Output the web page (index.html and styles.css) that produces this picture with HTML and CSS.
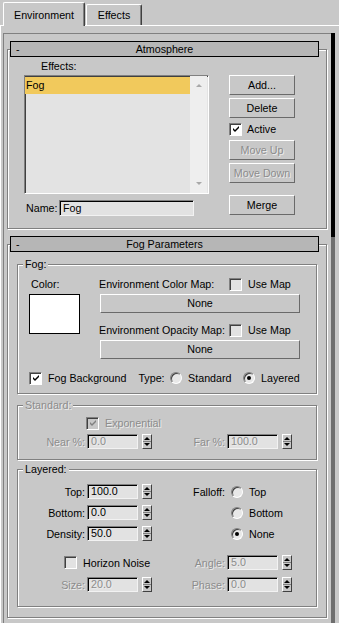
FILE: index.html
```html
<!DOCTYPE html>
<html lang="en">
<head>
    <meta charset="UTF-8">
    <meta name="viewport" content="width=device-width, initial-scale=1.0">
    <title>Environment and Effects</title>
    <link rel="stylesheet" href="styles.css">
</head>
<body>
    <div class="tabs">
        <div class="tab tab-env">Environment</div>
        <div class="tab tab-fx">Effects</div>
    </div>

    <div class="panel">
        <div class="scroller">
            <div class="rollout-list">

                <!-- Atmosphere -->
                <div class="rollout">
                    <div class="rollout-head"><span class="minus">-</span><span class="title">Atmosphere</span></div>
                    <div class="atmo-body">
                        <div class="atmo-left">
                            <div class="effects-label">Effects:</div>
                            <div class="list">
                                <div class="list-items">
                                    <div class="list-item selected">Fog</div>
                                </div>
                                <div class="list-scroll"><span class="arrow-up"></span><span class="arrow-down"></span></div>
                            </div>
                            <div class="name-row">
                                <span class="name-label">Name:</span>
                                <div class="field name-field">Fog</div>
                            </div>
                        </div>
                        <div class="atmo-right">
                            <div class="btn">Add...</div>
                            <div class="btn gap">Delete</div>
                            <div class="check-row gap">
                                <span class="check on"><svg width="9" height="9" viewBox="0 0 9 9"><polygon points="1,3 3,5 7,1 7,3 3,7 1,5"/></svg></span>
                                <span class="check-text active-text">Active</span>
                            </div>
                            <div class="btn gap dis">Move Up</div>
                            <div class="btn gap dis">Move Down</div>
                            <div class="btn merge">Merge</div>
                        </div>
                    </div>
                </div>

                <!-- Fog Parameters -->
                <div class="rollout">
                    <div class="rollout-head"><span class="minus">-</span><span class="title">Fog Parameters</span></div>
                    <div class="fog-body">

                        <div class="group">
                            <div class="group-title">Fog:</div>
                            <div class="fog-top">
                                <div class="color-col">
                                    <div class="color-label">Color:</div>
                                    <div class="swatch"></div>
                                </div>
                                <div class="maps-col">
                                    <div class="map-row">
                                        <span class="map-label">Environment Color Map:</span>
                                        <span class="check"></span>
                                        <span class="check-text">Use Map</span>
                                    </div>
                                    <div class="btn map-btn">None</div>
                                    <div class="map-row second">
                                        <span class="map-label">Environment Opacity Map:</span>
                                        <span class="check"></span>
                                        <span class="check-text">Use Map</span>
                                    </div>
                                    <div class="btn map-btn">None</div>
                                </div>
                            </div>
                            <div class="fog-opts">
                                <div class="fog-bg">
                                    <span class="check on"><svg width="9" height="9" viewBox="0 0 9 9"><polygon points="1,3 3,5 7,1 7,3 3,7 1,5"/></svg></span>
                                    <span class="check-text">Fog Background</span>
                                </div>
                                <span class="type-label">Type:</span>
                                <div class="opt">
                                    <span class="radio"></span>
                                    <span class="opt-text">Standard</span>
                                </div>
                                <div class="opt">
                                    <span class="radio on"></span>
                                    <span class="opt-text">Layered</span>
                                </div>
                            </div>
                        </div>

                        <div class="group group-std">
                            <div class="group-title dis">Standard:</div>
                            <div class="prow exp-row">
                                <span class="check dis exp-check"><svg width="9" height="9" viewBox="0 0 9 9"><polygon points="1,3 3,5 7,1 7,3 3,7 1,5"/></svg></span>
                                <span class="check-text dis">Exponential</span>
                            </div>
                            <div class="prow near-row">
                                <div class="half-l">
                                    <span class="plabel dis">Near %:</span>
                                    <div class="field num dis">0.0</div>
                                    <span class="spin"></span>
                                </div>
                                <div class="half-r">
                                    <span class="plabel-r dis">Far %:</span>
                                    <div class="field num dis">100.0</div>
                                    <span class="spin"></span>
                                </div>
                            </div>
                        </div>

                        <div class="group group-layered">
                            <div class="group-title">Layered:</div>
                            <div class="prow row-1">
                                <div class="half-l">
                                    <span class="plabel">Top:</span>
                                    <div class="field num">100.0</div>
                                    <span class="spin"></span>
                                </div>
                                <div class="half-r">
                                    <span class="plabel-r">Falloff:</span>
                                    <span class="radio"></span>
                                    <span class="opt-text">Top</span>
                                </div>
                            </div>
                            <div class="prow row-n">
                                <div class="half-l">
                                    <span class="plabel">Bottom:</span>
                                    <div class="field num">0.0</div>
                                    <span class="spin"></span>
                                </div>
                                <div class="half-r">
                                    <span class="plabel-r"></span>
                                    <span class="radio"></span>
                                    <span class="opt-text">Bottom</span>
                                </div>
                            </div>
                            <div class="prow row-n">
                                <div class="half-l">
                                    <span class="plabel">Density:</span>
                                    <div class="field num">50.0</div>
                                    <span class="spin"></span>
                                </div>
                                <div class="half-r">
                                    <span class="plabel-r"></span>
                                    <span class="radio on"></span>
                                    <span class="opt-text">None</span>
                                </div>
                            </div>
                            <div class="prow row-4">
                                <div class="half-l">
                                    <span class="check horizon-check"></span>
                                    <span class="check-text">Horizon Noise</span>
                                </div>
                                <div class="half-r">
                                    <span class="plabel-r dis">Angle:</span>
                                    <div class="field num dis">5.0</div>
                                    <span class="spin"></span>
                                </div>
                            </div>
                            <div class="prow row-5">
                                <div class="half-l">
                                    <span class="plabel dis">Size:</span>
                                    <div class="field num dis">20.0</div>
                                    <span class="spin"></span>
                                </div>
                                <div class="half-r">
                                    <span class="plabel-r dis">Phase:</span>
                                    <div class="field num dis">0.0</div>
                                    <span class="spin"></span>
                                </div>
                            </div>
                        </div>

                    </div>
                </div>

            </div>
            <div class="scrollbar"><div class="thumb"></div></div>
        </div>
    </div>
</body>
</html>
```

FILE: styles.css
```css
* {
    margin: 0;
    padding: 0;
    box-sizing: border-box;
}

body {
    width: 339px;
    height: 623px;
    overflow: hidden;
    background-color: #c8c8c8;
    font-family: "Liberation Sans", Arial, sans-serif;
    font-size: 10.7px;
    color: #000;
    white-space: nowrap;
}

.dis {
    color: #8c8c8c;
    text-shadow: 1px 1px 0 #ececec;
}

/* tabs */

.tabs {
    display: flex;
    align-items: flex-end;
    height: 25px;
    padding-left: 3px;
}

.tab {
    height: 21px;
    border: 1px solid #fff;
    border-right-color: #404040;
    border-bottom: none;
    border-radius: 2px 2px 0 0;
    box-shadow: inset -1px 0 0 #808080;
    text-align: center;
    line-height: 20px;
}

.tab-env {
    position: relative;
    z-index: 1;
    width: 82px;
    height: 24px;
    margin-bottom: -1px;
    background-color: #c8c8c8;
    line-height: 24px;
}

.tab-fx {
    width: 56px;
    margin-left: 1px;
}

.panel {
    height: 598px;
    border-top: 1px solid #fff;
    border-left: 1px solid #fff;
    padding: 7px 0 0 2px;
}

.scroller {
    display: flex;
    height: 100%;
}

.rollout-list {
    width: 328px;
    border-top: 1px solid #808080;
    border-left: 1px solid #808080;
}

.scrollbar {
    width: 4px;
    background-color: #6e6e6e;
}

.thumb {
    height: 204px;
    background-color: #000;
}

/* rollouts */

.rollout {
    width: 320px;
    margin: 15px 0 0 3px;
    border: 1px solid #808080;
    box-shadow: inset 1px 1px 0 #fff, 1px 1px 0 #fff;
}

.rollout-head {
    display: flex;
    align-items: center;
    width: 309px;
    height: 16px;
    margin: -9px 0 0 2px;
    padding: 0 13px 0 5px;
    border: 1px solid #000;
    background-color: #b6b6b6;
    line-height: 14px;
}

.minus {
    width: 8px;
}

.title {
    flex: 1;
    text-align: center;
}

/* buttons, fields, checks */

.btn {
    height: 20px;
    border: 1px solid;
    border-color: #fff #6a6a6a #6a6a6a #fff;
    text-align: center;
    line-height: 18px;
}

.field {
    height: 15px;
    border: 1px solid;
    border-color: #808080 #f2f2f2 #f2f2f2 #808080;
    box-shadow: inset 1px 1px 0 #000;
    background-color: #e2e2e2;
    padding-left: 3px;
    line-height: 13px;
}

.check {
    display: flex;
    align-items: center;
    justify-content: center;
    flex-shrink: 0;
    width: 13px;
    height: 13px;
    border: 1px solid;
    border-color: #808080 #fff #fff #808080;
    box-shadow: inset 1px 1px 0 #404040;
    background-color: #e2e2e2;
    padding: 1px 0 0 1px;
}

.check.on {
    background-color: #fff;
}

.check.dis {
    background-color: #c8c8c8;
}

.check.dis svg {
    fill: #808080;
}

.check-text {
    margin-left: 6px;
}

.radio {
    display: flex;
    align-items: center;
    justify-content: center;
    flex-shrink: 0;
    width: 12px;
    height: 12px;
    border: 1px solid;
    border-color: #808080 #fff #fff #808080;
    border-radius: 50%;
    box-shadow: inset 1px 1px 0 #404040;
    background-color: #e8e8e8;
}

.radio.on::after {
    content: "";
    width: 4px;
    height: 4px;
    border-radius: 50%;
    background-color: #000;
}

.opt-text {
    margin-left: 6px;
}

.spin {
    display: flex;
    flex-direction: column;
    align-items: center;
    justify-content: space-between;
    flex-shrink: 0;
    width: 10px;
    height: 15px;
    margin-left: 4px;
    padding: 2px 0;
    border: 1px solid;
    border-color: #fff #404040 #404040 #fff;
    background: linear-gradient(#c8c8c8 6px, #808080 6px, #808080 7px, #c8c8c8 7px);
}

.spin::before {
    content: "";
    border-left: 3px solid transparent;
    border-right: 3px solid transparent;
    border-bottom: 3px solid #000;
}

.spin::after {
    content: "";
    border-left: 3px solid transparent;
    border-right: 3px solid transparent;
    border-top: 3px solid #000;
}

/* atmosphere */

.atmo-body {
    display: flex;
    padding: 0 0 12px 16px;
}

.atmo-left {
    width: 185px;
}

.effects-label {
    padding-left: 17px;
    line-height: 18px;
}

.list {
    display: flex;
    height: 119px;
    border: 1px solid;
    border-color: #808080 #fff #fff #808080;
    box-shadow: inset 1px 1px 0 #404040;
    background-color: #e3e3e3;
}

.list-items {
    width: 165px;
    padding-top: 1px;
}

.list-item {
    height: 17px;
    padding-left: 1px;
    line-height: 17px;
}

.list-item.selected {
    background-color: #f1c95c;
}

.list-scroll {
    display: flex;
    flex-direction: column;
    align-items: center;
    justify-content: space-between;
    width: 17px;
    padding: 8px 0;
    background-color: #eeeeee;
}

.arrow-up {
    border-left: 3px solid transparent;
    border-right: 3px solid transparent;
    border-bottom: 3px solid #a8a8a8;
}

.arrow-down {
    border-left: 3px solid transparent;
    border-right: 3px solid transparent;
    border-top: 3px solid #a8a8a8;
}

.name-row {
    display: flex;
    align-items: center;
    margin-top: 6px;
}

.name-label {
    width: 35px;
    padding-left: 2px;
}

.name-field {
    width: 135px;
    height: 16px;
    line-height: 14px;
}

.atmo-right {
    width: 66px;
    margin-left: 20px;
    padding-top: 18px;
}

.atmo-right .gap {
    margin-top: 3px;
}

.check-row {
    display: flex;
    align-items: center;
    height: 16px;
}

.active-text {
    margin-left: 5px;
}

.atmo-right .merge {
    margin-top: 12px;
}

/* fog parameters */

.fog-body {
    padding: 12px 9px 10px;
}

.group {
    width: 300px;
    border: 1px solid #808080;
    box-shadow: inset 1px 1px 0 #fff, 1px 1px 0 #fff;
}

.group-title {
    width: max-content;
    margin: -7px 0 0 5px;
    padding: 0 2px;
    background-color: #c8c8c8;
    line-height: 13px;
}

.fog-top {
    display: flex;
    padding: 5px 0 0 11px;
}

.color-col {
    width: 51px;
}

.color-label {
    padding-left: 2px;
    line-height: 16px;
}

.swatch {
    height: 40px;
    margin-top: 2px;
    border: 1px solid #000;
    background-color: #fff;
}

.maps-col {
    width: 200px;
    margin-left: 20px;
}

.map-row {
    display: flex;
    align-items: center;
    height: 16px;
}

.map-row.second {
    margin-top: 9px;
}

.map-label {
    flex-shrink: 0;
    width: 130px;
    margin-left: -1px;
}

.map-btn {
    height: 19px;
    margin-top: 2px;
    line-height: 17px;
}

.fog-opts {
    display: flex;
    align-items: center;
    height: 16px;
    margin: 11px 0 7px 11px;
}

.fog-bg {
    display: flex;
    align-items: center;
    width: 114px;
}

.type-label {
    width: 33px;
}

.opt {
    display: flex;
    align-items: center;
    width: 76px;
}

.group-std {
    margin-top: 11px;
    padding-bottom: 10px;
}

.group-layered {
    margin-top: 9px;
    padding-bottom: 14px;
}

.prow {
    display: flex;
    align-items: center;
    height: 15px;
}

.exp-row {
    height: 16px;
    margin-top: 3px;
}

.exp-check {
    margin-left: 68px;
}

.near-row {
    margin-top: 3px;
}

.row-1 {
    margin-top: 8px;
}

.row-n {
    margin-top: 6px;
}

.row-4 {
    margin-top: 14px;
}

.row-5 {
    margin-top: 7px;
}

.half-l {
    display: flex;
    flex-shrink: 0;
    align-items: center;
    width: 134px;
}

.half-r {
    display: flex;
    align-items: center;
}

.plabel {
    flex-shrink: 0;
    width: 67px;
    text-align: right;
}

.plabel-r {
    flex-shrink: 0;
    width: 73px;
    text-align: right;
}

.half-r .radio {
    margin-left: 6px;
}

.field.num {
    flex-shrink: 0;
    width: 51px;
    margin-left: 2px;
}

.horizon-check {
    margin-left: 46px;
}
```
